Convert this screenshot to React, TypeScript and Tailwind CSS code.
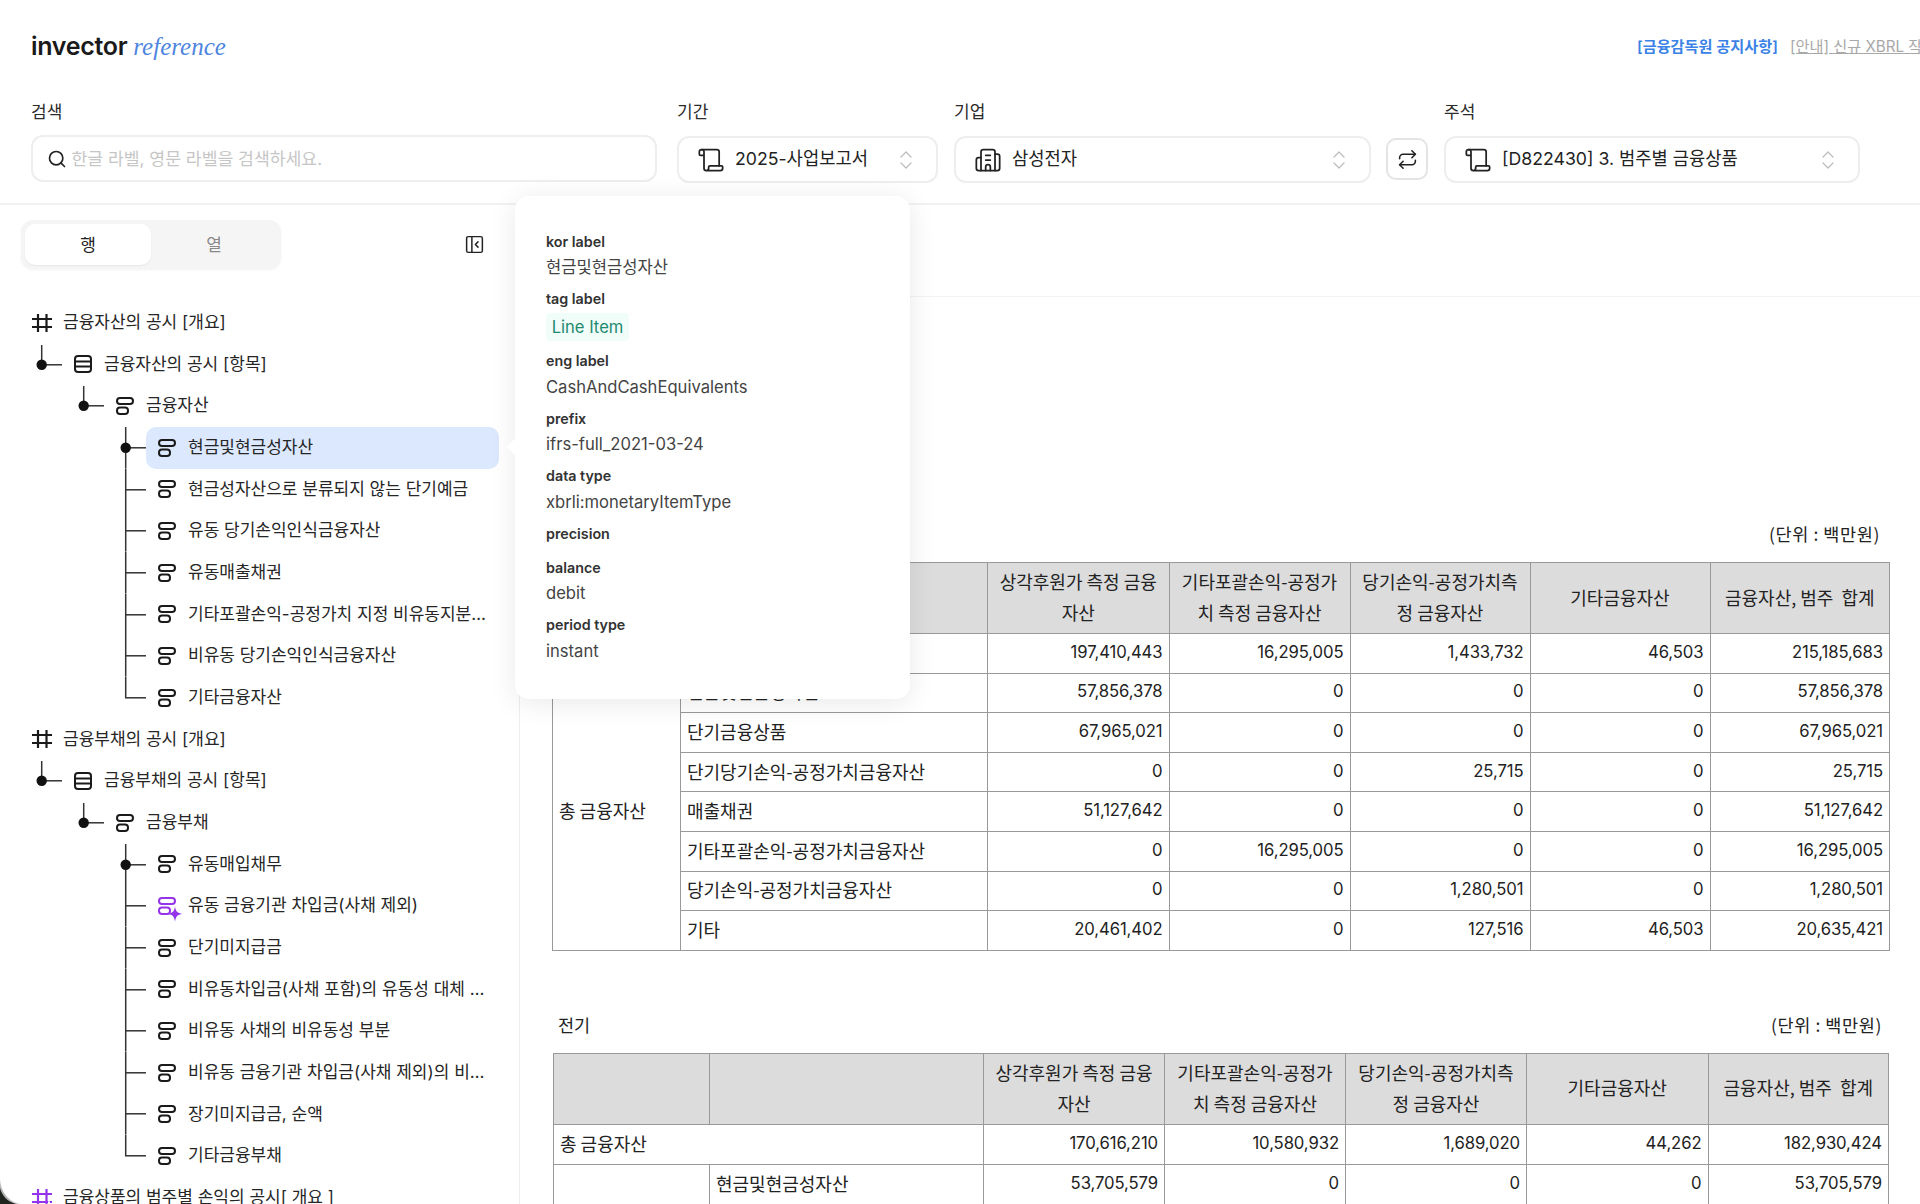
import React from 'react'
import { Building2, ChevronsUpDown, PanelLeftClose, Repeat, Scroll, Search } from 'lucide-react'

const STAR = 'M0 -5.5 C0.7 -1.6 1.6 -0.7 5.5 0 C1.6 0.7 0.7 1.6 0 5.5 C-0.7 1.6 -1.6 0.7 -5.5 0 C-1.6 -0.7 -0.7 -1.6 0 -5.5 Z'

type IconProps = { ai?: boolean }

const HashIcon: React.FC<IconProps> = ({ ai }) => (
  <svg width="20" height="20" viewBox="0 0 20 20" fill="none" className={`shrink-0 overflow-visible ${ai ? 'text-[#9333ea]' : 'text-[#1a1a1a]'}`}>
    <path d="M6 1V19M14.5 1V19M0 6H20M0 14H20" stroke="currentColor" strokeWidth="2.2" />
    {ai && <path d={STAR} transform="translate(17 20) scale(1.3)" fill="currentColor" stroke="white" strokeWidth="0.8" />}
  </svg>
)

const RowsIcon: React.FC = () => (
  <svg width="18" height="18" viewBox="0 0 18 18" fill="none" className="shrink-0 text-[#1a1a1a]">
    <rect x="1" y="1" width="16" height="16" rx="3" stroke="currentColor" strokeWidth="2" />
    <path d="M1 6.5H17M1 11.5H17" stroke="currentColor" strokeWidth="2" />
  </svg>
)

const ItemIcon: React.FC<IconProps> = ({ ai }) => (
  <svg width="18" height="18" viewBox="0 0 18 18" fill="none" className={`shrink-0 overflow-visible ${ai ? 'text-[#9333ea]' : 'text-[#1a1a1a]'}`}>
    <rect x="1" y="1" width="16" height="6" rx="3" stroke="currentColor" strokeWidth="2" />
    <rect x="1" y="10.5" width="11" height="6.5" rx="3" stroke="currentColor" strokeWidth="2" />
    {ai && <path d={STAR} transform="translate(17 17) scale(1.35)" fill="currentColor" />}
  </svg>
)

type Link = 'elbow' | 'first' | 'mid' | 'last'

const Connector: React.FC<{ link: Link }> = ({ link }) => {
  const mid = 20.8
  const end = link === 'mid' || link === 'first' ? 41.67 : mid
  return (
    <svg width="31" height="41.67" viewBox="0 0 31 41.67" fill="none" className="shrink-0 text-[#333]">
      <path d={`M10.7 ${link === 'elbow' ? 1 : 0}V${end}`} stroke="currentColor" strokeWidth="1.5" />
      <path d={`M10 ${mid}H31`} stroke="currentColor" strokeWidth="1.5" />
      {(link === 'elbow' || link === 'first') && <circle cx="10.7" cy={mid} r="5.2" fill="#111" />}
    </svg>
  )
}

type Node = {
  text: string
  level: number
  kind: 'hash' | 'rows' | 'item'
  link?: Link
  ai?: boolean
  active?: boolean
}

const TREE: Node[] = [
  { text: '금융자산의 공시 [개요]', level: 0, kind: 'hash' },
  { text: '금융자산의 공시 [항목]', level: 1, kind: 'rows', link: 'elbow' },
  { text: '금융자산', level: 2, kind: 'item', link: 'elbow' },
  { text: '현금및현금성자산', level: 3, kind: 'item', link: 'first', active: true },
  { text: '현금성자산으로 분류되지 않는 단기예금', level: 3, kind: 'item', link: 'mid' },
  { text: '유동 당기손익인식금융자산', level: 3, kind: 'item', link: 'mid' },
  { text: '유동매출채권', level: 3, kind: 'item', link: 'mid' },
  { text: '기타포괄손익-공정가치 지정 비유동지분상품 투자자산', level: 3, kind: 'item', link: 'mid' },
  { text: '비유동 당기손익인식금융자산', level: 3, kind: 'item', link: 'mid' },
  { text: '기타금융자산', level: 3, kind: 'item', link: 'last' },
  { text: '금융부채의 공시 [개요]', level: 0, kind: 'hash' },
  { text: '금융부채의 공시 [항목]', level: 1, kind: 'rows', link: 'elbow' },
  { text: '금융부채', level: 2, kind: 'item', link: 'elbow' },
  { text: '유동매입채무', level: 3, kind: 'item', link: 'first' },
  { text: '유동 금융기관 차입금(사채 제외)', level: 3, kind: 'item', link: 'mid', ai: true },
  { text: '단기미지급금', level: 3, kind: 'item', link: 'mid' },
  { text: '비유동차입금(사채 포함)의 유동성 대체 부분', level: 3, kind: 'item', link: 'mid' },
  { text: '비유동 사채의 비유동성 부분', level: 3, kind: 'item', link: 'mid' },
  { text: '비유동 금융기관 차입금(사채 제외)의 비유동성 부분', level: 3, kind: 'item', link: 'mid' },
  { text: '장기미지급금, 순액', level: 3, kind: 'item', link: 'mid' },
  { text: '기타금융부채', level: 3, kind: 'item', link: 'last' },
  { text: '금융상품의 범주별 손익의 공시[ 개요 ]', level: 0, kind: 'hash', ai: true },
]

const TreeRow: React.FC<{ node: Node }> = ({ node }) => {
  const indent = ['ml-[20px]', 'ml-[31px]', 'ml-[73px]', 'ml-[115px]'][node.level]
  return (
    <div className={`flex h-[41.67px] items-center ${indent}`}>
      {node.link && <Connector link={node.link} />}
      <div
        className={`flex h-full min-w-0 flex-1 items-center rounded-[10px] pr-3 pl-3 ${node.level === 0 ? 'gap-[11px]' : 'gap-3'} ${
          node.active ? 'bg-[#dbe8fd]' : ''
        }`}
      >
        {node.kind === 'hash' && <HashIcon ai={node.ai} />}
        {node.kind === 'rows' && <RowsIcon />}
        {node.kind === 'item' && <ItemIcon ai={node.ai} />}
        <span className="truncate text-[17px] text-[#262626]">{node.text}</span>
      </div>
    </div>
  )
}

const Sidebar: React.FC = () => (
  <aside className="w-[520px] shrink-0 border-r border-[#eeeeee]">
    <div className="mt-[15px] flex items-center justify-between pr-[34px] pl-[21px]">
      <div className="flex h-[49px] w-[260px] rounded-xl bg-[#f5f5f5] p-1 shadow-[0_1px_3px_rgba(0,0,0,0.05)]">
        <button className="w-[126px] rounded-[10px] bg-white pt-[2px] text-[17px] text-[#222] shadow-[0_1px_2px_rgba(0,0,0,0.06)]">행</button>
        <button className="flex-1 pt-[2px] text-[17px] text-[#888]">열</button>
      </div>
      <PanelLeftClose size={21} strokeWidth={1.7} className="text-[#222]" />
    </div>
    <div className="mt-[33px] w-[499px]">
      {TREE.map((node) => (
        <TreeRow key={node.text} node={node} />
      ))}
    </div>
  </aside>
)

const Field: React.FC<{ label: string; value?: string; compact?: boolean }> = ({ label, value, compact }) => (
  <div className={compact ? 'mb-[14px]' : 'mb-[12px]'}>
    <div className="h-5 text-[14.3px] leading-5 font-semibold text-[#333]">{label}</div>
    {value && <div className="mt-[5.5px] h-5 text-[16.6px] leading-5 text-[#444]">{value}</div>}
  </div>
)

const Popover: React.FC = () => (
  <div className="absolute top-[196px] left-[515px] w-[395px] rounded-[14px] bg-white pt-[35.5px] pr-[31px] pb-[26px] pl-[31px] shadow-[0_4px_28px_rgba(0,0,0,0.09)]">
    <div className="absolute top-[245px] left-[-6px] size-3 rotate-45 rounded-[2px] bg-white" />
    <Field label="kor label" value="현금및현금성자산" />
    <div className="mb-[10px]">
      <div className="h-5 text-[14.3px] leading-5 font-semibold text-[#333]">tag label</div>
      <div className="mt-1 flex h-[28px] w-[83px] items-center justify-center rounded-sm bg-[#f0fdf9] text-[16.6px] text-[#1f8a70]">Line Item</div>
    </div>
    <Field label="eng label" value="CashAndCashEquivalents" />
    <Field label="prefix" value="ifrs-full_2021-03-24" />
    <Field label="data type" value="xbrli:monetaryItemType" />
    <Field label="precision" compact />
    <Field label="balance" value="debit" />
    <Field label="period type" value="instant" />
  </div>
)

const HEADERS = [
  ['상각후원가 측정 금융', '자산'],
  ['기타포괄손익-공정가', '치 측정 금융자산'],
  ['당기손익-공정가치측', '정 금융자산'],
  ['기타금융자산'],
  ['금융자산, 범주  합계'],
]

const CURRENT: [string, string[]][] = [
  ['현금및현금성자산', ['57,856,378', '0', '0', '0', '57,856,378']],
  ['단기금융상품', ['67,965,021', '0', '0', '0', '67,965,021']],
  ['단기당기손익-공정가치금융자산', ['0', '0', '25,715', '0', '25,715']],
  ['매출채권', ['51,127,642', '0', '0', '0', '51,127,642']],
  ['기타포괄손익-공정가치금융자산', ['0', '16,295,005', '0', '0', '16,295,005']],
  ['당기손익-공정가치금융자산', ['0', '0', '1,280,501', '0', '1,280,501']],
  ['기타', ['20,461,402', '0', '127,516', '46,503', '20,635,421']],
]

const cell = 'border border-[#999999] px-[6px] pb-[2px] text-[18px]'

const HeaderRow: React.FC = () => (
  <tr className="h-[71px] bg-[#dcdcdc]">
    <th className={cell} />
    <th className={cell} />
    {HEADERS.map((lines) => (
      <th key={lines[0]} className={`${cell} leading-[30.6px] font-normal whitespace-pre`}>
        {lines.map((line) => (
          <div key={line}>{line}</div>
        ))}
      </th>
    ))}
  </tr>
)

const Numbers: React.FC<{ values: string[] }> = ({ values }) => (
  <>
    {values.map((value, i) => (
      <td key={i} className={`${cell} text-right font-['Inter',sans-serif] !text-[16.7px] tracking-[-0.1px]`}>
        {value}
      </td>
    ))}
  </>
)

const Main: React.FC = () => (
  <main className="min-w-0 flex-1 font-['Noto_Sans_CJK_KR',sans-serif] text-[#222]">
    <div className="h-[92px] border-b border-[#f3f3f3]" />
    <section className="mt-[225px] pl-[32px]">
      <div className="mb-[16px] flex h-6 w-[1328px] items-center justify-between pl-[6px] text-[17.5px]">
        <span>당기</span>
        <span className="tracking-[0.6px]">(단위 : 백만원)</span>
      </div>
      <table className="w-[1337px] table-fixed border-collapse">
        <colgroup>
          <col className="w-[128px]" />
          <col className="w-[307px]" />
          <col className="w-[181.5px]" />
          <col className="w-[181px]" />
          <col className="w-[180px]" />
          <col className="w-[180px]" />
          <col className="w-[179.5px]" />
        </colgroup>
        <thead>
          <HeaderRow />
        </thead>
        <tbody>
          <tr className="h-[39.6px]">
            <td colSpan={2} className={cell}>
              총 금융자산
            </td>
            <Numbers values={['197,410,443', '16,295,005', '1,433,732', '46,503', '215,185,683']} />
          </tr>
          {CURRENT.map(([label, values], i) => (
            <tr key={label} className="h-[39.6px]">
              {i === 0 && (
                <td rowSpan={CURRENT.length} className={cell}>
                  총 금융자산
                </td>
              )}
              <td className={cell}>{label}</td>
              <Numbers values={values} />
            </tr>
          ))}
        </tbody>
      </table>
    </section>
    <section className="mt-[62px] pl-[33px]">
      <div className="mb-[16px] flex h-6 w-[1329px] items-center justify-between pl-[5px] text-[17.5px]">
        <span>전기</span>
        <span className="tracking-[0.6px]">(단위 : 백만원)</span>
      </div>
      <table className="w-[1335px] table-fixed border-collapse">
        <colgroup>
          <col className="w-[156px]" />
          <col className="w-[274px]" />
          <col className="w-[181px]" />
          <col className="w-[181px]" />
          <col className="w-[181px]" />
          <col className="w-[181.5px]" />
          <col className="w-[180.5px]" />
        </colgroup>
        <thead>
          <HeaderRow />
        </thead>
        <tbody>
          <tr className="h-[40px]">
            <td colSpan={2} className={cell}>
              총 금융자산
            </td>
            <Numbers values={['170,616,210', '10,580,932', '1,689,020', '44,262', '182,930,424']} />
          </tr>
          <tr className="h-[40px]">
            <td className={`${cell} border-b-0`} />
            <td className={cell}>현금및현금성자산</td>
            <Numbers values={['53,705,579', '0', '0', '0', '53,705,579']} />
          </tr>
        </tbody>
      </table>
    </section>
  </main>
)

const Select: React.FC<{ label: string; value: string; icon: React.ReactNode; width: string; extra?: string }> = ({ label, value, icon, width, extra }) => (
  <div className={`flex flex-col gap-3 ${width} ${extra ?? ''}`}>
    <label className="h-6 text-[17px] leading-6 text-[#2b2b2b]">{label}</label>
    <button className="flex h-[47px] items-center rounded-xl border-2 border-[#eeeeee] bg-white pr-[18px] pl-[18px] text-[17.7px] text-[#222]">
      {icon}
      <span className="ml-[10px] flex-1 text-left">{value}</span>
      <ChevronsUpDown size={24} strokeWidth={1.3} className="text-[#bdbdbd]" />
    </button>
  </div>
)

const Header: React.FC = () => (
  <header className="h-[205px] shrink-0 border-b-2 border-[#f1f1f1]">
    <div className="flex h-[94px] items-center justify-between pl-[31px]">
      <div className="flex items-baseline gap-[6px]">
        <span className="text-[25px] font-semibold tracking-[-0.3px] text-[#1a1a1a]">invector</span>
        <span className="font-['Liberation_Serif',serif] text-[25px] text-[#4f86e0] italic">reference</span>
      </div>
      <div className="flex w-[283px] gap-3 overflow-hidden text-[15.2px] whitespace-nowrap">
        <span className="font-semibold text-[#3b82e6]">[금융감독원 공지사항]</span>
        <span className="text-[#a8a8a8] underline">[안내] 신규 XBRL 작성 기준 안내</span>
      </div>
    </div>
    <div className="mt-[6px] flex items-end gap-[17px] pl-[31px]">
      <div className="mb-px flex w-[626px] flex-col gap-[11px]">
        <label className="h-6 text-[17px] leading-6 text-[#2b2b2b]">검색</label>
        <div className="flex h-[47px] items-center gap-[5px] rounded-xl border-2 border-[#eeeeee] bg-white pl-[13.5px]">
          <Search size={20} strokeWidth={2} className="shrink-0 text-[#222]" />
          <input
            readOnly
            placeholder="한글 라벨, 영문 라벨을 검색하세요."
            className="min-w-0 flex-1 bg-transparent text-[17.2px] outline-none placeholder:text-[#c6c6c6]"
          />
        </div>
      </div>
      <Select label="기간" value="2025-사업보고서" width="w-[261px]" extra="ml-[3px]" icon={<Scroll size={28} strokeWidth={1.5} />} />
      <Select label="기업" value="삼성전자" width="w-[417px]" extra="-ml-px" icon={<Building2 size={28} strokeWidth={1.5} />} />
      <button className="mb-[3px] -ml-[2px] flex size-[42px] shrink-0 items-center justify-center rounded-[10px] border-2 border-[#e4e4e4]">
        <Repeat size={21} strokeWidth={1.8} className="text-[#222]" />
      </button>
      <Select label="주석" value="[D822430] 3. 범주별 금융상품" width="w-[416px]" extra="-ml-px" icon={<Scroll size={28} strokeWidth={1.5} />} />
    </div>
  </header>
)

const App: React.FC = () => {
  return (
    <div className="relative flex h-[1204px] w-[1920px] flex-col overflow-hidden bg-white font-['Inter','Noto_Sans_CJK_KR',sans-serif]">
      <Header />
      <div className="flex min-h-0 flex-1">
        <Sidebar />
        <Main />
      </div>
      <Popover />
      {/* window corner at bottom left */}
      <svg width="22" height="26" viewBox="0 0 22 26" className="absolute bottom-0 left-0">
        <path d="M0 0C0 12 8 24 20 26H0Z" fill="#b8b8b8" />
        <path d="M0 10C2 18 8 24 16 26H0Z" fill="#20261f" />
      </svg>
    </div>
  )
}

export default App
